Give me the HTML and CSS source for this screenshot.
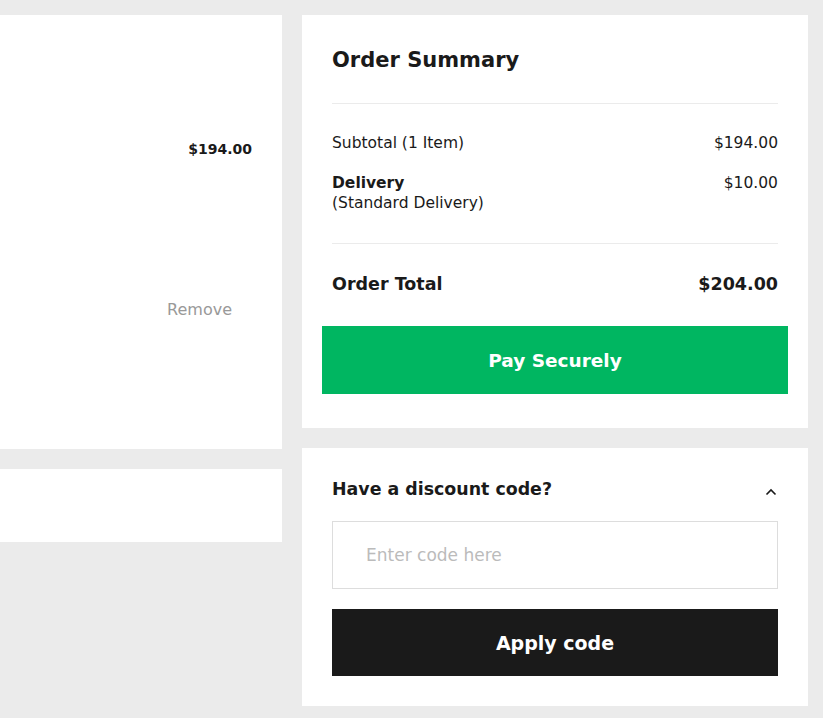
FILE: index.html
```html
<!DOCTYPE html>
<html lang="en">
<head>
  <meta charset="UTF-8">
  <meta name="viewport" content="width=device-width, initial-scale=1.0">
  <title>Checkout</title>
  <link rel="stylesheet" href="styles.css">
</head>
<body>
  <div class="page">
    <!-- Basket column -->
    <div class="basket-col">
      <div class="card basket-item">
        <div class="item-price">$194.00</div>
        <a href="#" class="remove-link">Remove</a>
      </div>
      <div class="card basket-extra"></div>
    </div>

    <!-- Summary column -->
    <div class="summary-col">
      <div class="card summary">
        <h2>Order Summary</h2>
        <div class="summary-lines">
          <div class="line">
            <span>Subtotal (1 Item)</span>
            <span>$194.00</span>
          </div>
          <div class="line">
            <span><strong>Delivery</strong><br>(Standard Delivery)</span>
            <span>$10.00</span>
          </div>
        </div>
        <div class="line total">
          <span>Order Total</span>
          <span>$204.00</span>
        </div>
        <button class="pay-btn">Pay Securely</button>
      </div>

      <div class="card discount">
        <div class="discount-head">
          <h3>Have a discount code?</h3>
          <svg class="chevron" width="12" height="8" viewBox="0 0 12 8"><path d="M1.5 6.5 L6 2 L10.5 6.5" fill="none" stroke="#1a1a1a" stroke-width="1.6"/></svg>
        </div>
        <input type="text" class="code-input" placeholder="Enter code here">
        <button class="apply-btn">Apply code</button>
      </div>
    </div>
  </div>
</body>
</html>
```

FILE: styles.css
```css
html, body {
  margin: 0;
  padding: 0;
  background-color: #ebebeb;
  font-family: "DejaVu Sans", sans-serif;
  color: #1a1a1a;
}

.page {
  display: flex;
  gap: 20px;
  padding-top: 15px;
}

.card {
  background-color: white;
}

/* Basket */
.basket-col {
  width: 282px;
  display: flex;
  flex-direction: column;
  gap: 20px;
}

.basket-item {
  height: 434px;
  display: flex;
  flex-direction: column;
  align-items: flex-end;
  padding-right: 30px;
  box-sizing: border-box;
}

.item-price {
  font-weight: 700;
  font-size: 14px;
  margin-top: 126px;
}

.remove-link {
  color: #999;
  font-size: 16px;
  text-decoration: none;
  margin-top: 143px;
  margin-right: 20px;
}

.basket-extra {
  height: 73px;
}

/* Summary */
.summary-col {
  width: 506px;
  display: flex;
  flex-direction: column;
  gap: 20px;
}

.summary {
  padding: 32px 30px 34px;
}

.summary h2 {
  margin: 0;
  font-size: 21px;
  line-height: 26px;
  font-weight: 700;
  padding-bottom: 30px;
  border-bottom: 1px solid #ebebeb;
}

.summary-lines {
  padding: 29px 0 30px;
  border-bottom: 1px solid #ebebeb;
  display: flex;
  flex-direction: column;
  gap: 20px;
}

.line {
  display: flex;
  justify-content: space-between;
  font-size: 15.5px;
  line-height: 20px;
}

.line strong {
  font-weight: 700;
}

.line.total {
  font-size: 17.5px;
  line-height: 22px;
  font-weight: 700;
  padding: 29px 0 31px;
}

.pay-btn {
  display: block;
  width: calc(100% + 20px);
  margin: 0 -10px;
  height: 68px;
  border: none;
  background-color: #00b661;
  color: white;
  font-family: inherit;
  font-size: 18.5px;
  font-weight: 700;
  cursor: pointer;
}

/* Discount */
.discount {
  padding: 30px;
}

.discount-head {
  display: flex;
  justify-content: space-between;
  align-items: center;
  margin-bottom: 21px;
}

.discount-head h3 {
  margin: 0;
  font-size: 17.4px;
  font-weight: 700;
  line-height: 22px;
}

.chevron {
  margin-top: 6px;
  margin-right: 1px;
}

.code-input {
  display: block;
  width: 100%;
  height: 68px;
  box-sizing: border-box;
  border: 1px solid #ddd;
  padding: 0 33px;
  font-family: inherit;
  font-size: 17px;
  margin-bottom: 20px;
}

.code-input::placeholder {
  color: #bbb;
}

.apply-btn {
  display: block;
  width: 100%;
  height: 67px;
  border: none;
  background-color: #1a1a1a;
  color: white;
  font-family: inherit;
  font-size: 19px;
  font-weight: 700;
  cursor: pointer;
}
```
